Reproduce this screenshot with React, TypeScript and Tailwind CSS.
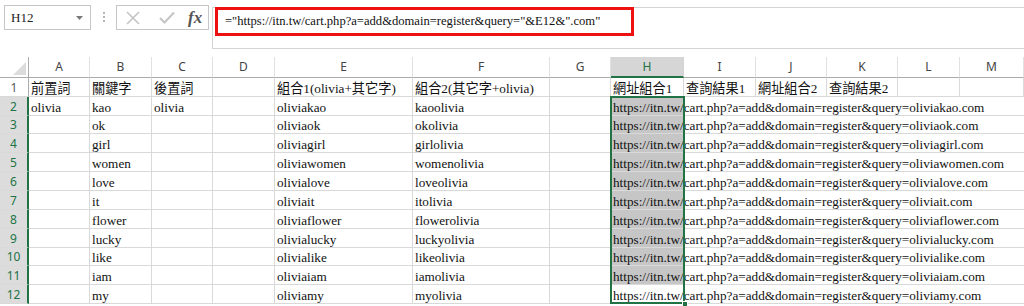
import React from 'react';

// Column layout (widths include the right gridline)
interface Col {
  key: string;
  width: string;
}

const columns: Col[] = [
  { key: 'A', width: 'w-[61px]' },
  { key: 'B', width: 'w-[62px]' },
  { key: 'C', width: 'w-[61px]' },
  { key: 'D', width: 'w-[62px]' },
  { key: 'E', width: 'w-[138px]' },
  { key: 'F', width: 'w-[137px]' },
  { key: 'G', width: 'w-[61px]' },
  { key: 'H', width: 'w-[73px]' },
  { key: 'I', width: 'w-[72px]' },
  { key: 'J', width: 'w-[71px]' },
  { key: 'K', width: 'w-[71px]' },
  { key: 'L', width: 'w-[62px]' },
  { key: 'M', width: 'w-[64px]' },
];

const keywords = ['kao', 'ok', 'girl', 'women', 'love', 'it', 'flower', 'lucky', 'like', 'iam', 'my'];
const rowHeights = ['h-[19px]', 'h-[19px]', 'h-[18px]', 'h-[19px]', 'h-[19px]', 'h-[19px]', 'h-[19px]', 'h-[19px]', 'h-[19px]', 'h-[18px]', 'h-[19px]', 'h-[19px]'];

const cellFont = "font-['Liberation_Serif','Noto_Sans_CJK_TC',serif] text-[13.2px] leading-[15px] text-[#111]";
const headFont = "font-['Noto_Sans','Open_Sans',sans-serif] text-[12px]";

const Cell: React.FC<{ width: string; text?: string }> = ({ width, text }) => (
  <div className={`${width} shrink-0 border-r border-b border-[#d9d9d9] flex items-end pl-[2px] whitespace-nowrap overflow-visible`}>
    {text}
  </div>
);

const RowHeader: React.FC<{ n: number; selected: boolean }> = ({ n, selected }) => (
  <div
    className={`w-[29px] shrink-0 border-b border-[#d9d9d9] flex items-center justify-center ${headFont} ${
      selected
        ? 'bg-[#dcdcdc] text-[#217346] border-r-2 border-r-[#217346]'
        : 'bg-white text-[#555] border-r border-r-[#ababab]'
    }`}
  >
    {n}
  </div>
);

const App: React.FC = () => {
  const firstRow = ['前置詞', '關鍵字', '後置詞', '', '組合1(olivia+其它字)', '組合2(其它字+olivia)', '', '網址組合1', '查詢結果1', '網址組合2', '查詢結果2', '', ''];

  return (
    <div className="w-[1024px] h-[306px] bg-white overflow-hidden">
      {/* formula bar */}
      <div className="h-[57px] flex items-start">
        <div className="ml-[4px] mt-[5px] w-[87px] h-[25px] border border-[#c6c6c6] flex items-center justify-between pl-[6px] pr-[7px]">
          <span className="font-['Liberation_Serif',serif] text-[13px] text-[#222]">H12</span>
          <svg width="7" height="4" viewBox="0 0 7 4">
            <path d="M0 0 L7 0 L3.5 4 Z" fill="#7a7a7a" />
          </svg>
        </div>
        <div className="ml-[12px] mt-[12px] flex flex-col gap-[2px]">
          <div className="w-[2px] h-[2px] bg-[#b5b5b5]" />
          <div className="w-[2px] h-[2px] bg-[#b5b5b5]" />
          <div className="w-[2px] h-[2px] bg-[#b5b5b5]" />
        </div>
        <div className="ml-[11px] mt-[5px] w-[93px] h-[25px] border border-[#c6c6c6] flex items-center pl-[9px]">
          <svg width="14" height="14" viewBox="0 0 14 14">
            <path d="M1 1 L13 13 M13 1 L1 13" stroke="#c4c4c4" strokeWidth="1.6" />
          </svg>
          <svg className="ml-[19px]" width="16" height="13" viewBox="0 0 16 13">
            <path d="M1 7 L5.5 11.5 L15 1.5" stroke="#c4c4c4" strokeWidth="2" fill="none" />
          </svg>
          <span className="ml-[13px] font-['Liberation_Serif',serif] italic font-bold text-[17px] text-[#555] leading-none">fx</span>
        </div>
        <div className="ml-[3px] mt-[7px] flex-1 h-[42px] border-l border-t border-b border-[#d4d4d4]">
          <div className="ml-[2px] -mt-px w-[419px] h-[29px] border-[3px] border-[#ee1111] flex items-center pl-[7px] whitespace-nowrap font-['Liberation_Serif',serif] text-[12.6px] text-[#111]">
            ="https://itn.tw/cart.php?a=add&amp;domain=register&amp;query="&amp;E12&amp;".com"
          </div>
        </div>
      </div>

      {/* grid */}
      <div className="relative">
        {/* column headers */}
        <div className="flex h-[21px]">
          <div className="w-[29px] shrink-0 border-r border-b border-[#ababab] flex items-end justify-end pr-[2px] pb-[2px]">
            <svg width="13" height="13" viewBox="0 0 13 13">
              <path d="M13 0 L13 13 L0 13 Z" fill="#dcdcdc" />
            </svg>
          </div>
          {columns.map((c) =>
            c.key === 'H' ? (
              <div
                key={c.key}
                className={`${c.width} shrink-0 bg-[#d6d6d6] border-r border-[#d4d4d4] border-b-2 border-b-[#217346] flex items-center justify-center ${headFont} text-[#217346]`}
              >
                {c.key}
              </div>
            ) : (
              <div
                key={c.key}
                className={`${c.width} shrink-0 border-r border-[#e1e1e1] border-b border-b-[#ababab] flex items-center justify-center ${headFont} text-[#444]`}
              >
                {c.key}
              </div>
            )
          )}
        </div>

        {/* row 1 */}
        <div className={`flex ${rowHeights[0]} ${cellFont}`}>
          <RowHeader n={1} selected={false} />
          {columns.map((c, i) => (
            <Cell key={c.key} width={c.width} text={firstRow[i]} />
          ))}
        </div>

        {/* rows 2 - 12 */}
        {keywords.map((kw, idx) => {
          const n = idx + 2;
          const active = n === 12;
          return (
            <div key={kw} className={`flex ${rowHeights[idx + 1]} ${cellFont}`}>
              <RowHeader n={n} selected />
              <Cell width="w-[61px]" text={n === 2 ? 'olivia' : ''} />
              <Cell width="w-[62px]" text={kw} />
              <Cell width="w-[61px]" text={n === 2 ? 'olivia' : ''} />
              <Cell width="w-[62px]" />
              <Cell width="w-[138px]" text={`olivia${kw}`} />
              <Cell width="w-[137px]" text={`${kw}olivia`} />
              <Cell width="w-[61px]" />
              <div
                className={`w-[413px] shrink-0 border-b border-[#d9d9d9] flex items-end pl-[2px] whitespace-nowrap ${
                  active ? '' : 'bg-[linear-gradient(to_right,#c6c6c6_73px,transparent_73px)]'
                }`}
              >
                https://itn.tw/cart.php?a=add&amp;domain=register&amp;query=olivia{kw}.com
              </div>
            </div>
          );
        })}

        {/* selection H2:H12 */}
        <div className="absolute left-[610px] top-[39px] w-[75px] h-[208px] border-2 border-[#217346] pointer-events-none" />
        <div className="absolute left-[682px] top-[244px] w-[6px] h-[6px] bg-[#217346] border border-white" />
      </div>
    </div>
  );
};

export default App;
